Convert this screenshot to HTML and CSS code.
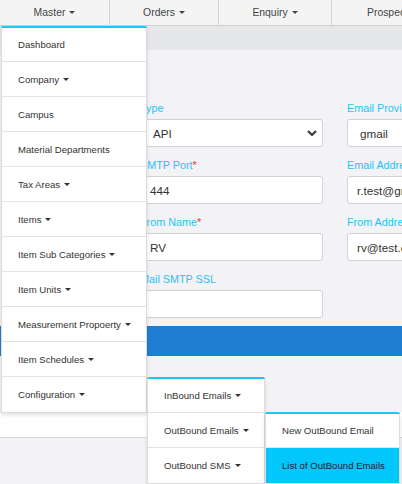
FILE: index.html
```html
<!DOCTYPE html>
<html>
<head>
<meta charset="utf-8">
<link rel="stylesheet" href="styles.css">
</head>
<body>
<nav class="topnav">
  <div class="nav-cell c1">Master <span class="caret"></span></div>
  <div class="nav-cell c2">Orders <span class="caret"></span></div>
  <div class="nav-cell c3">Enquiry <span class="caret"></span></div>
  <div class="nav-cell c4">Prospect <span class="caret"></span></div>
</nav>
<div class="band"></div>
<main class="page">
  <form class="form-grid">
    <div class="field">
      <label class="lbl">Type</label>
      <div class="ctrl select">API
        <svg class="chev" width="10" height="6" viewBox="0 0 10 6"><path d="M1 1 L5 5 L9 1" fill="none" stroke="#333" stroke-width="2"/></svg>
      </div>
    </div>
    <div class="field">
      <label class="lbl">Email Provider</label>
      <div class="ctrl select">gmail</div>
    </div>
    <div class="field">
      <label class="lbl">SMTP Port<span class="req">*</span></label>
      <div class="ctrl">444</div>
    </div>
    <div class="field">
      <label class="lbl">Email Address</label>
      <div class="ctrl">r.test@gmail.com</div>
    </div>
    <div class="field">
      <label class="lbl">From Name<span class="req">*</span></label>
      <div class="ctrl">RV</div>
    </div>
    <div class="field">
      <label class="lbl">From Address</label>
      <div class="ctrl">rv@test.com</div>
    </div>
    <div class="field">
      <label class="lbl">Mail SMTP SSL</label>
      <div class="ctrl"></div>
    </div>
  </form>
  <div class="bluebar"></div>
  <div class="spacer"></div>
  <div class="whiteband"></div>
</main>

<ul class="menu main-menu">
  <li>Dashboard</li>
  <li>Company <span class="caret"></span></li>
  <li>Campus</li>
  <li>Material Departments</li>
  <li>Tax Areas <span class="caret"></span></li>
  <li>Items <span class="caret"></span></li>
  <li>Item Sub Categories <span class="caret"></span></li>
  <li>Item Units <span class="caret"></span></li>
  <li>Measurement Propoerty <span class="caret"></span></li>
  <li>Item Schedules <span class="caret"></span></li>
  <li>Configuration <span class="caret"></span></li>
</ul>
<ul class="menu sub-menu-1">
  <li>InBound Emails <span class="caret"></span></li>
  <li>OutBound Emails <span class="caret"></span></li>
  <li>OutBound SMS <span class="caret"></span></li>
</ul>
<ul class="menu sub-menu-2">
  <li>New OutBound Email</li>
  <li class="active">List of OutBound Emails</li>
</ul>
</body>
</html>
```
FILE: styles.css
```css
html, body {
  margin: 0;
  padding: 0;
}
body {
  width: 402px;
  height: 484px;
  overflow: hidden;
  position: relative;
  background: #f3f3f5;
  font-family: "Liberation Sans", Arial, sans-serif;
  color: #333;
}
.topnav {
  display: flex;
  height: 25px;
  background: #f4f4f4;
  border-bottom: 1px solid #cfcfcf;
  font-size: 10.4px;
  color: #444;
}
.nav-cell {
  display: flex;
  align-items: center;
  justify-content: center;
  flex: none;
  border-right: 1px solid #d6d6d6;
  white-space: nowrap;
}
.nav-cell.c1 { width: 109px; }
.nav-cell.c2 { width: 108px; }
.nav-cell.c3 { width: 112px; }
.nav-cell.c4 { width: 120px; border-right: none; justify-content: flex-start; padding-left: 35px; }
.caret {
  display: inline-block;
  width: 0;
  height: 0;
  border-left: 3px solid transparent;
  border-right: 3px solid transparent;
  border-top: 3px solid #444;
  margin-left: 4px;
  vertical-align: middle;
}
.band {
  height: 24px;
  background: #e6e7e8;
}
.page {
  display: flex;
  flex-direction: column;
}
.form-grid {
  display: grid;
  grid-template-columns: 183px 183px;
  column-gap: 24px;
  row-gap: 11px;
  margin: 51px 0 0 140px;
}
.field {
  display: flex;
  flex-direction: column;
}
.lbl {
  font-size: 10.8px;
  line-height: 14px;
  color: #1fc3f5;
  margin-bottom: 4px;
  white-space: nowrap;
}
.req { color: #e8333a; }
.ctrl {
  box-sizing: border-box;
  height: 28px;
  background: #fff;
  border: 1px solid #cfd3d8;
  border-radius: 3px;
  padding: 0 9px;
  display: flex;
  align-items: center;
  font-size: 11.7px;
  color: #333;
  white-space: nowrap;
  overflow: hidden;
}
.ctrl.select {
  padding-left: 12px;
  justify-content: space-between;
  padding-right: 5px;
}
.chev { flex: none; }
.bluebar {
  height: 30px;
  background: #1e7ed1;
  margin-top: 8px;
}
.spacer { height: 56px; }
.whiteband {
  height: 25px;
  background: #fff;
  border-bottom: 1px solid #d8d8d8;
}
.menu {
  position: absolute;
  list-style: none;
  margin: 0;
  padding: 0;
  background: #fff;
  box-sizing: border-box;
  border: 1px solid #dcdcdc;
  border-top: none;
  border-radius: 3px 3px 0 0;
  box-shadow: 0 2px 4px rgba(0,0,0,0.12);
  font-size: 9.6px;
  color: #333;
}
.menu::before {
  content: "";
  position: absolute;
  left: -1px;
  right: -1px;
  top: -1px;
  height: 2px;
  background: #1ec6f7;
  border-radius: 3px 3px 0 0;
}
.menu li {
  box-sizing: border-box;
  height: 35px;
  display: flex;
  align-items: center;
  padding-left: 16px;
  border-bottom: 1px solid #e3e3e3;
  white-space: nowrap;
}
.menu li:last-child { border-bottom: none; }
.menu .caret { border-top-color: #333; }
.main-menu {
  left: 1px;
  top: 27px;
  width: 146px;
}
.sub-menu-1 {
  left: 147px;
  top: 378px;
  width: 118px;
}
.sub-menu-2 {
  left: 265px;
  top: 413px;
  width: 135px;
}
.menu li.active {
  background: #02c7fb;
  color: #222;
}
```
